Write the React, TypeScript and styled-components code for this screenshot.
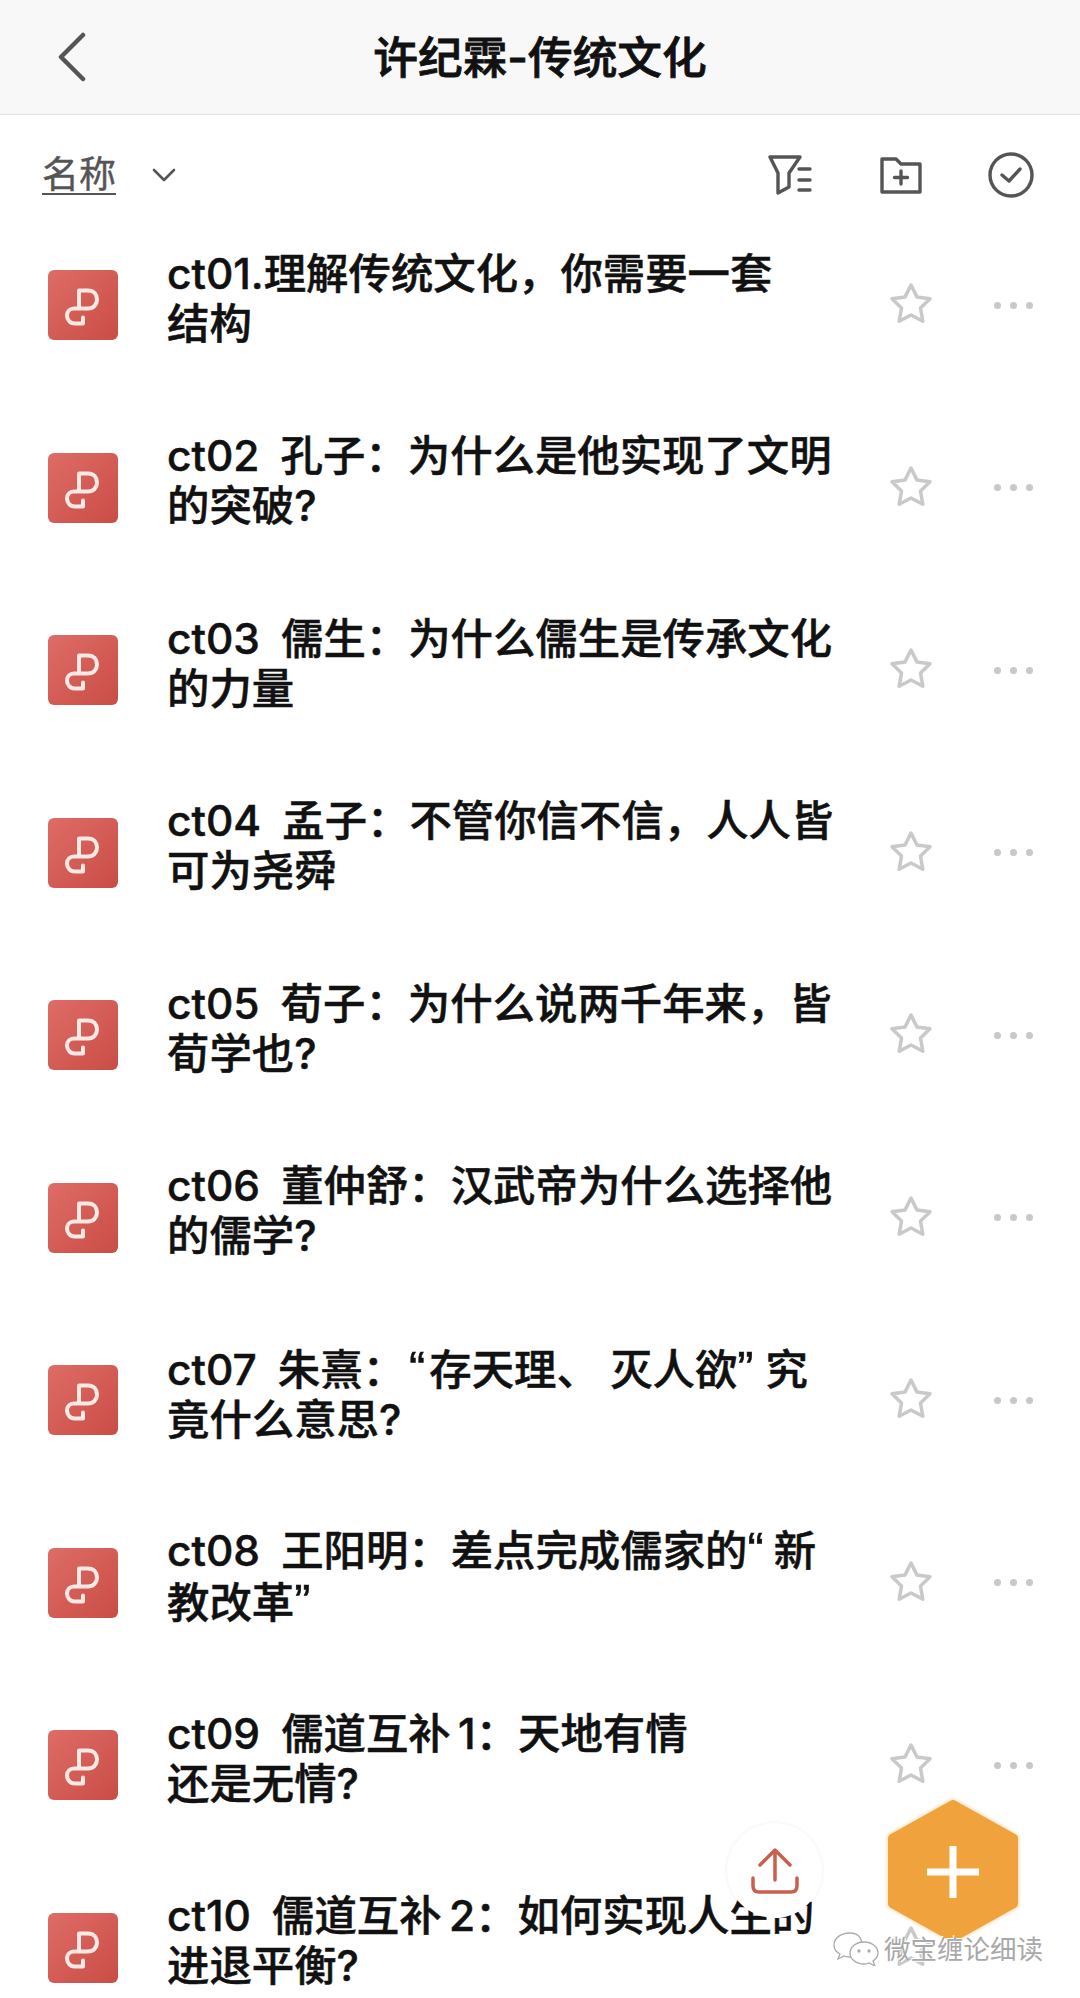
import { FC } from 'react'
import styled, { createGlobalStyle } from 'styled-components'

const GlobalStyle = createGlobalStyle`
  html, body {
    margin: 0;
    padding: 0;
    background: #fff;
  }
  body {
    font-family: Inter, "Noto Sans CJK SC", sans-serif;
  }
`

const Page = styled.div`
  position: relative;
  width: 1080px;
  height: 1998px;
  overflow: hidden;
  background: #fff;
`

const Header = styled.header`
  display: flex;
  align-items: center;
  justify-content: center;
  position: relative;
  box-sizing: border-box;
  height: 115px;
  padding-top: 1px;
  background: #f8f8f8;
  border-bottom: 1px solid #e3e3e3;
`

const BackButton = styled.svg`
  position: absolute;
  left: 57px;
  top: 32px;
`

const Title = styled.h1`
  margin: 0;
  font-size: 44.7px;
  font-weight: 500;
  line-height: 50px;
  color: #111;
  -webkit-text-stroke: 0.8px #111;
`

const SortBar = styled.div`
  display: flex;
  align-items: center;
  box-sizing: border-box;
  height: 99px;
  padding: 20px 46px 0 42px;
`

const SortLabel = styled.span`
  font-size: 37px;
  line-height: 42px;
  color: #555;
  text-decoration: underline;
  text-underline-offset: 5px;
  text-decoration-thickness: 2px;
  -webkit-text-stroke: 0.4px #555;
`

const SortArrow = styled.svg`
  margin-left: 36px;
  margin-right: auto;
`

const ToolIcon = styled.svg<{ $gap?: number }>`
  margin-left: ${p => p.$gap ?? 0}px;
`

const Row = styled.div`
  display: flex;
  align-items: center;
  height: 182.5px;
  padding-left: 48px;
`

const FileIcon = styled.svg`
  flex: none;
  border-radius: 6px;
`

const RowText = styled.div`
  flex: none;
  width: 680px;
  margin-left: 49px;
  margin-bottom: 13px;
  font-size: 42.4px;
  font-weight: 500;
  line-height: 50px;
  color: #111;
  white-space: pre;
  -webkit-text-stroke: 0.5px #111;
`

const Quote = styled.span<{ $l?: number; $r?: number }>`
  font-family: "Liberation Sans", sans-serif;
  font-size: 1.15em;
  margin-left: ${p => p.$l ?? 0}px;
  margin-right: ${p => p.$r ?? 0}px;
`

const StarIcon = styled.svg`
  flex: none;
  margin-left: 42px;
  margin-bottom: 2px;
`

const Dots = styled.div`
  display: flex;
  gap: 9px;
  margin-left: 61px;
`

const Dot = styled.span`
  width: 7px;
  height: 7px;
  border-radius: 50%;
  background: #c8c8c8;
`

const UploadButton = styled.div`
  position: absolute;
  left: 727px;
  top: 1823px;
  display: flex;
  align-items: center;
  justify-content: center;
  width: 95px;
  height: 95px;
  border-radius: 50%;
  background: #fff;
  box-shadow: 0 0 4px rgba(0, 0, 0, 0.07);
`

const AddButton = styled.svg`
  position: absolute;
  left: 885px;
  top: 1798px;
  filter: drop-shadow(0 0 2px rgba(246, 190, 110, 0.8));
`

const Watermark = styled.div`
  position: absolute;
  left: 833px;
  top: 1927px;
  display: flex;
  align-items: center;
  gap: 5px;
  font-size: 26.5px;
  line-height: 44px;
  color: #a8a8a8;
  text-shadow: 1px 1px 0 #fff, -1px -1px 0 #fff;
`

const ITEMS = [
  ['ct01.理解传统文化，你需要一套', '结构'],
  ['ct02\u2002孔子：为什么是他实现了文明', '的突破?'],
  ['ct03\u2002儒生：为什么儒生是传承文化', '的力量'],
  ['ct04\u2002孟子：不管你信不信，人人皆', '可为尧舜'],
  ['ct05\u2002荀子：为什么说两千年来，皆', '荀学也?'],
  ['ct06\u2002董仲舒：汉武帝为什么选择他', '的儒学?'],
  [<>ct07{'\u2002'}朱熹：<Quote $l={4} $r={4}>“</Quote>存天理、 灭人欲<Quote $r={12}>”</Quote>究</>, '竟什么意思?'],
  [<>ct08{'\u2002'}王阳明：差点完成儒家的<Quote $r={10}>“</Quote>新</>, <>教改革<Quote>”</Quote></>],
  ['ct09\u2002儒道互补\u20091：天地有情', '还是无情?'],
  ['ct10\u2002儒道互补\u20092：如何实现人生的', '进退平衡?'],
]

const PptIcon: FC = () => (
  <FileIcon width="70" height="70" viewBox="0 0 70 70">
    <defs>
      <linearGradient id="ppt" x1="0" y1="0" x2="1" y2="1">
        <stop offset="0" stopColor="#df6c67" />
        <stop offset="1" stopColor="#c94d45" />
      </linearGradient>
    </defs>
    <rect width="70" height="70" fill="url(#ppt)" />
    <path
      d="M31 20.500h9c6 0 9 4.200 9 9s-3.500 9-9 9h-9v-18M31 38.500c-1 0-3 0-5 0-4 0-7 3-7 7s3 8 7.500 8h8.500v-6"
      fill="none"
      stroke="#fbe9e6"
      strokeWidth="4"
      strokeLinecap="round"
      strokeLinejoin="round"
    />
  </FileIcon>
)

const Star: FC = () => (
  <StarIcon width="44" height="44" viewBox="0 0 44 44">
    <polygon
      points="22,3 27.900,14.900 41,16.800 31.500,26.100 33.800,39.200 22,33 10.200,39.200 12.500,26.100 3,16.800 16.100,14.900"
      fill="none"
      stroke="#c9c9c9"
      strokeWidth="3.500"
      strokeLinejoin="round"
    />
  </StarIcon>
)

export default function App() {
  return (
    <Page>
      <GlobalStyle />
      <Header>
        <BackButton width="32" height="50" viewBox="0 0 32 50">
          <path d="M26 3 4 25l22 22" fill="none" stroke="#555" strokeWidth="4.500" strokeLinecap="round" strokeLinejoin="round" />
        </BackButton>
        <Title>许纪霖-传统文化</Title>
      </Header>

      <SortBar>
        <SortLabel>名称</SortLabel>
        <SortArrow width="24" height="16" viewBox="0 0 24 16">
          <path d="M2 3l10 10L22 3" fill="none" stroke="#555" strokeWidth="2.600" strokeLinecap="round" strokeLinejoin="round" />
        </SortArrow>
        <ToolIcon width="44" height="40" viewBox="0 0 44 40" fill="none" stroke="#555" strokeWidth="3.400" strokeLinecap="round" strokeLinejoin="round">
          <path d="M2 2h30L21 18v14l-11 6V18z" />
          <path d="M31 14h11M31 25h11M31 35h11" />
        </ToolIcon>
        <ToolIcon $gap={68} width="42" height="38" viewBox="0 0 42 38" fill="none" stroke="#555" strokeWidth="3.400" strokeLinecap="round" strokeLinejoin="round">
          <path d="M2 3h14l5 5h19v28H2z" />
          <path d="M21 15v13M14.500 21.500h13" />
        </ToolIcon>
        <ToolIcon $gap={66} width="46" height="46" viewBox="0 0 46 46" fill="none" stroke="#555" strokeWidth="3.400" strokeLinecap="round" strokeLinejoin="round">
          <circle cx="23" cy="23" r="21" />
          <path d="M14 23l7 6 11-12" />
        </ToolIcon>
      </SortBar>

      {ITEMS.map(([first, second], i) => (
        <Row key={i}>
          <PptIcon />
          <RowText>
            {first}
            {'\n'}
            {second}
          </RowText>
          <Star />
          {i < 9 && (
            <Dots>
              <Dot />
              <Dot />
              <Dot />
            </Dots>
          )}
        </Row>
      ))}

      <UploadButton>
        <svg width="48" height="46" viewBox="0 0 48 46" fill="none" stroke="#c9604e" strokeWidth="3.500" strokeLinecap="round" strokeLinejoin="round">
          <path d="M24 2v30M9 17 24 2l15 15" />
          <path d="M2 30v8c0 4 2 6 6 6h32c4 0 6-2 6-6v-8" />
        </svg>
      </UploadButton>

      <AddButton width="136" height="146" viewBox="0 0 136 146">
        <polygon points="68,6 129,40 129,106 68,140 7,106 7,40" fill="#f0a33d" stroke="#f0a33d" strokeWidth="8" strokeLinejoin="round" />
        <path d="M68 48v52M42 74h52" stroke="#fff" strokeWidth="7" />
      </AddButton>

      <Watermark>
        <svg width="46" height="34" viewBox="0 0 46 34" fill="#fff" stroke="#aaa" strokeWidth="1.300">
          <path d="M17 1C8 1 1 6 1 13c0 4 2 7 6 9l-2 5 6-3c2 1 4 1 6 1 7 0 12-5 12-12S25 1 17 1z" />
          <path d="M31 10c-8 0-14 5-14 11s6 11 14 11c2 0 3 0 5-1l6 3-2-5c3-2 5-5 5-8 0-6-6-11-14-11z" />
          <circle cx="26" cy="19" r="1" fill="#aaa" />
          <circle cx="36" cy="19" r="1" fill="#aaa" />
        </svg>
        <span>微宝缠论细读</span>
      </Watermark>
    </Page>
  )
}
